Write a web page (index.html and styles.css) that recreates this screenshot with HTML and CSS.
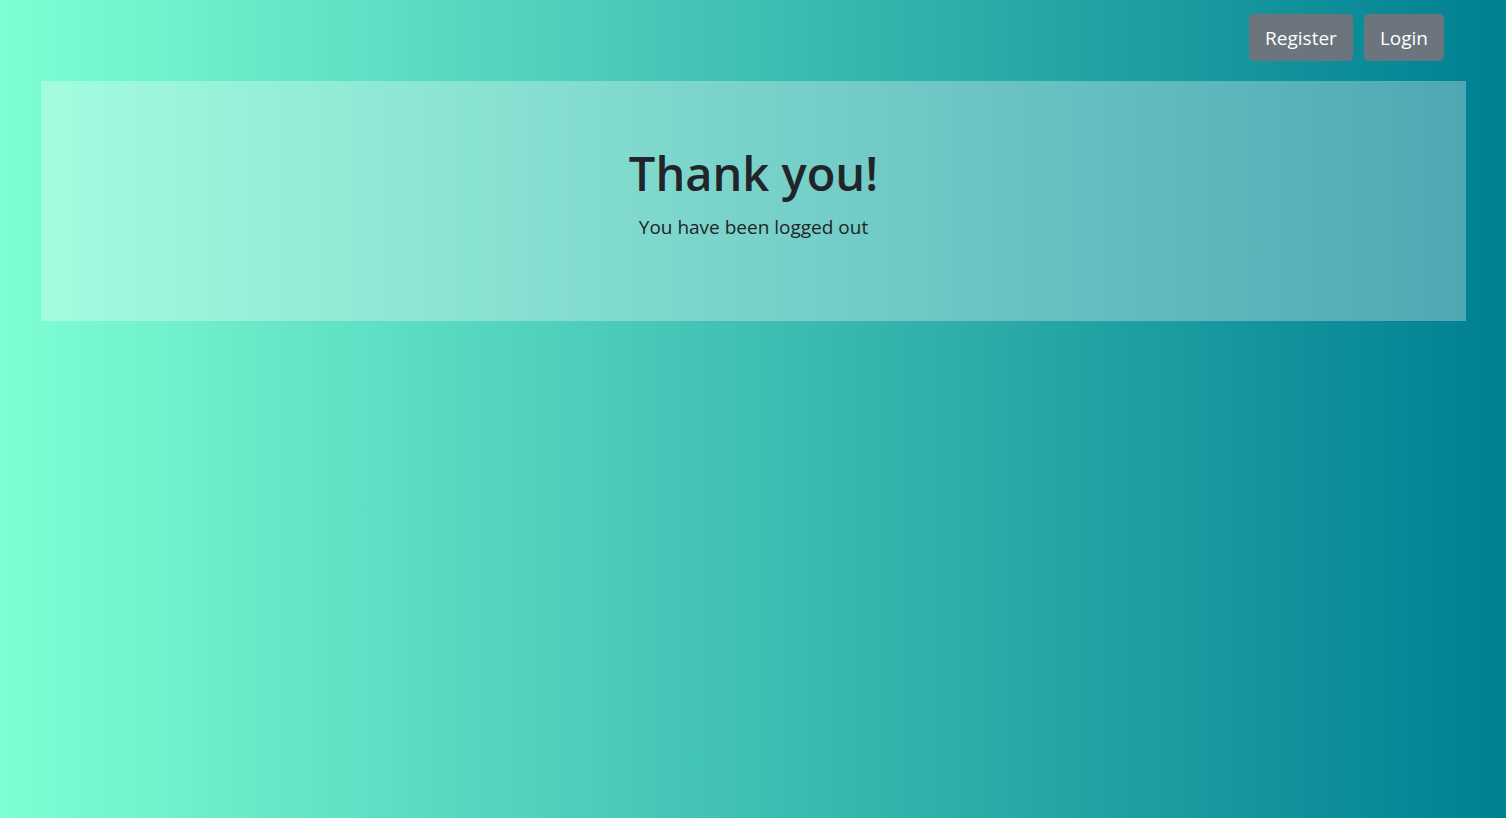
FILE: index.html
```html
<!DOCTYPE html>
<html lang="en">
<head>
<meta charset="utf-8">
<title>Logged out</title>
<link rel="stylesheet" href="styles.css">
</head>
<body>
<nav class="topbar">
  <a class="btn" href="#">Register</a>
  <a class="btn" href="#">Login</a>
</nav>
<main class="jumbotron">
  <h1 class="title">Thank you!</h1>
  <p class="lead">You have been logged out</p>
</main>
</body>
</html>
```
FILE: styles.css
```css
html, body {
  margin: 0;
  height: 100%;
}
body {
  background: linear-gradient(to right, #7fffd4 0%, #007f92 100%);
  font-family: "Open Sans", "Noto Sans", sans-serif;
  color: #212529;
  min-height: 818px;
}
.topbar {
  display: flex;
  justify-content: flex-end;
  gap: 11px;
  padding: 14px 62px 0 0;
  height: 46px;
}
.btn {
  display: flex;
  align-items: center;
  justify-content: center;
  box-sizing: border-box;
  height: 47px;
  padding: 1px 16px 0;
  background: #6c757d;
  color: #fff;
  border-radius: 5px;
  font-size: 19px;
  text-decoration: none;
}
.jumbotron {
  margin: 21px 40px 0 41px;
  height: 240px;
  box-sizing: border-box;
  padding-top: 60px;
  background: rgba(255, 255, 255, 0.3);
  text-align: center;
}
.title {
  margin: 0;
  font-size: 47px;
  font-weight: 600;
  line-height: 64px;
}
.lead {
  margin: 8px 0 0;
  font-size: 19px;
  line-height: 28px;
}
```
